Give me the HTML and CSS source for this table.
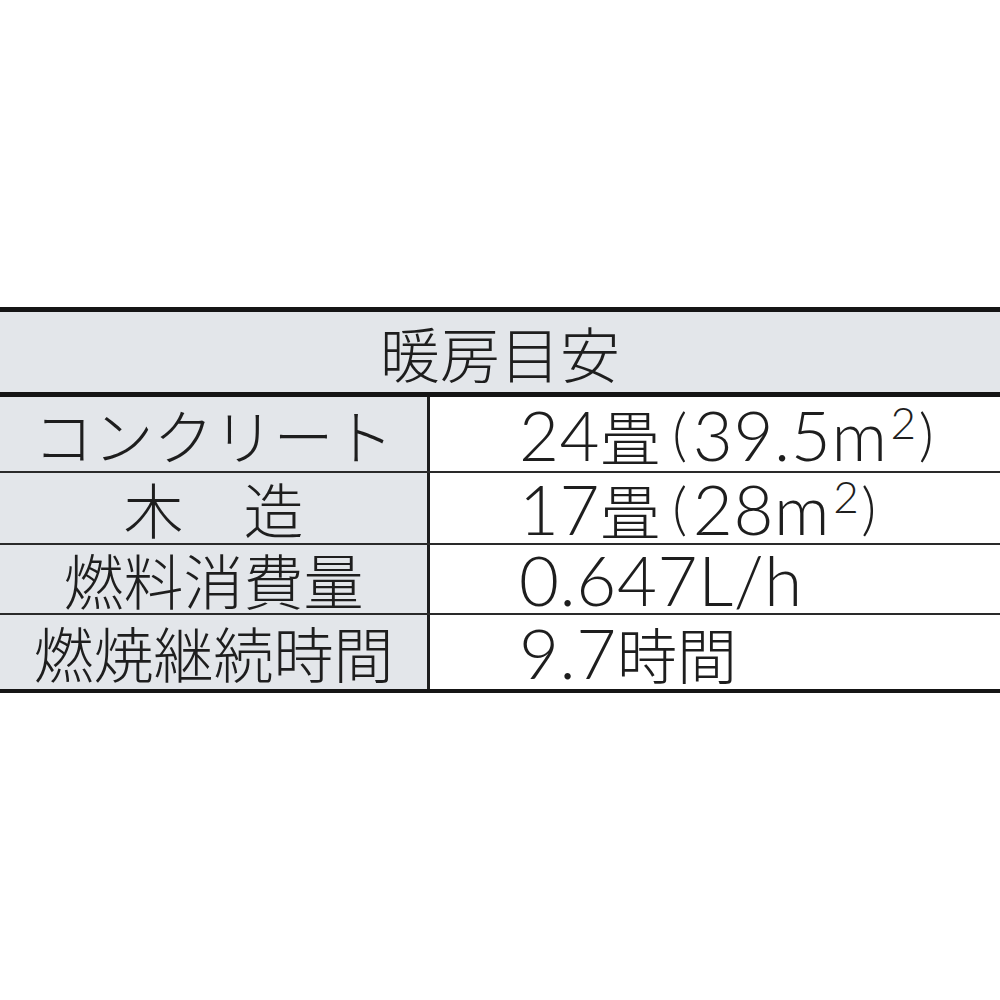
FILE: index.html
```html
<!DOCTYPE html>
<html lang="ja">
<head>
<meta charset="utf-8">
<link rel="stylesheet" href="styles.css">
</head>
<body>
<div class="page">
  <div class="spec">
    <div class="head">暖房目安</div>
    <div class="row r1"><div class="label">コンクリート</div><div class="value"><p class="txt"><span class="lat">24</span>畳<span class="lat paren open">(</span><span class="lat">39.5m</span><sup class="lat">2</sup><span class="lat paren">)</span></p></div></div>
    <div class="row r2"><div class="label">木　造</div><div class="value"><p class="txt"><span class="lat">17</span>畳<span class="lat paren open">(</span><span class="lat">28m</span><sup class="lat">2</sup><span class="lat paren">)</span></p></div></div>
    <div class="row r3"><div class="label">燃料消費量</div><div class="value"><p class="txt"><span class="lat">0.647L/h</span></p></div></div>
    <div class="row r4"><div class="label">燃焼継続時間</div><div class="value"><p class="txt"><span class="lat">9.7</span>時間</p></div></div>
  </div>
</div>
</body>
</html>
```
FILE: styles.css
```css
html, body {
  margin: 0;
  padding: 0;
  background: #ffffff;
}
.page {
  padding-top: 307px;
  font-family: "Noto Sans CJK JP", "Noto Sans", sans-serif;
  font-weight: 300;
  color: #1e1e1e;
}
.spec {
  border-top: 5px solid #151515;
  border-bottom: 4px solid #151515;
}
.head {
  height: 80px;
  background: #e3e6ea;
  border-bottom: 5px solid #151515;
  display: flex;
  align-items: center;
  justify-content: center;
  font-size: 60px;
  line-height: 1;
}
.row {
  display: flex;
  font-size: 60px;
  line-height: 1;
}
.row + .row {
  border-top: 2px solid #2a2a2a;
}
.r1 { height: 74px; }
.r2 { height: 70px; }
.r3 { height: 68px; }
.r4 { height: 74px; }
.label {
  width: 427px;
  background: #e3e6ea;
  border-right: 3px solid #1e1e1e;
  display: flex;
  align-items: center;
  justify-content: center;
}
.value {
  flex: 1;
  display: flex;
  align-items: center;
  padding-left: 89px;
  white-space: nowrap;
}
.txt {
  margin: 0;
  line-height: 1;
}
.lat {
  font-family: "Lato", "Open Sans", sans-serif;
  font-weight: 300;
  font-size: 69px;
  line-height: 1;
  letter-spacing: 0.6px;
}
.paren {
  font-size: 58px;
  vertical-align: 6px;
}
.paren.open {
  margin-left: 12px;
  margin-right: 5px;
}
sup.lat {
  font-size: 44px;
  line-height: 1;
  vertical-align: top;
  margin-left: 3px;
  margin-right: 2px;
}
```
